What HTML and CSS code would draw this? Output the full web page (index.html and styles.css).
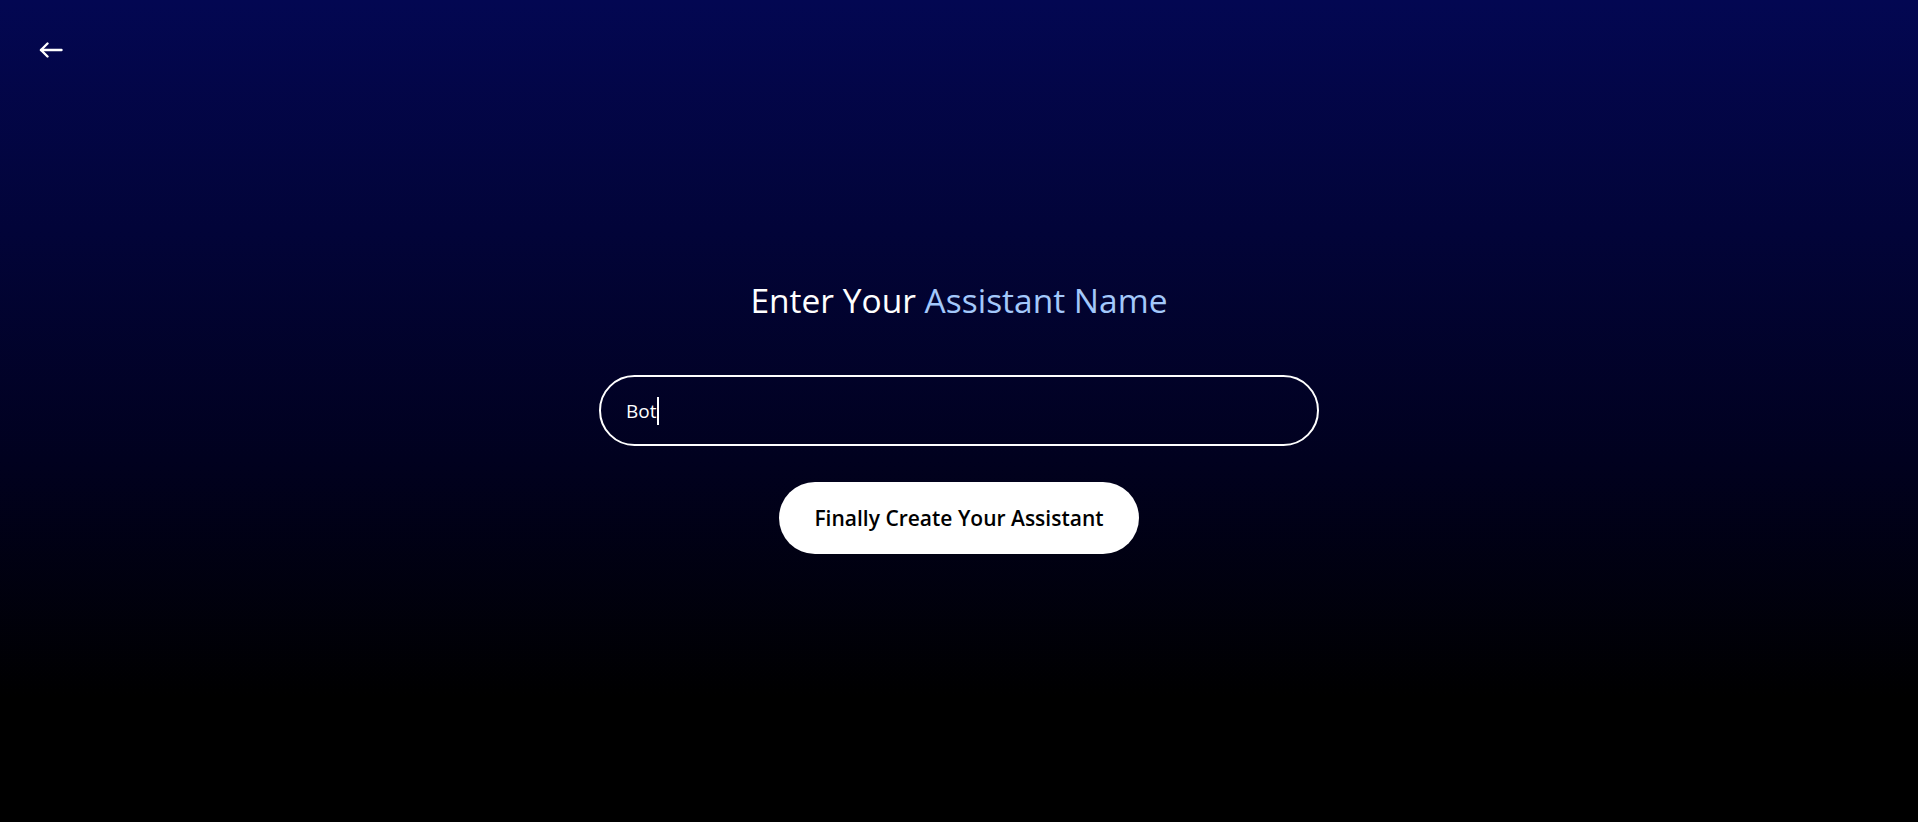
FILE: index.html
```html
<!DOCTYPE html>
<html lang="en">
<head>
<meta charset="utf-8">
<title>Customize Assistant Name</title>
<link rel="stylesheet" href="styles.css">
</head>
<body>
<main class="page">
  <button class="back" aria-label="Back">
    <svg width="24" height="16" viewBox="0 0 24 16" fill="none" stroke="#ffffff" stroke-width="2.4" stroke-linecap="round" stroke-linejoin="round"><path d="M22.5 8H2"/><path d="M8.5 1.5L2 8l6.5 6.5"/></svg>
  </button>
  <h1 class="title">Enter Your <span class="accent">Assistant Name</span></h1>
  <div class="field"><span class="value">Bot</span><span class="caret"></span></div>
  <button class="cta">Finally Create Your Assistant</button>
</main>
</body>
</html>
```

FILE: styles.css
```css
* { box-sizing: border-box; }
html, body { margin: 0; padding: 0; height: 100%; }
body {
  background: linear-gradient(to bottom, #030752 0%, #01011f 56%, #000000 85%);
  font-family: "Open Sans", "Noto Sans", sans-serif;
  color: #ffffff;
}
.page {
  position: relative;
  height: 822px;
  display: flex;
  flex-direction: column;
  align-items: center;
  justify-content: center;
  padding-top: 10px;
}
.back {
  position: absolute;
  top: 42px;
  left: 39px;
  padding: 0;
  border: 0;
  background: none;
  display: flex;
}
.title {
  margin: 0 0 53px;
  font-size: 33.5px;
  font-weight: 400;
  line-height: 44px;
  color: #ffffff;
}
.accent { color: #a3c8fb; }
.field {
  width: 720px;
  height: 71px;
  border: 2px solid #ffffff;
  border-radius: 36px;
  background: transparent;
  display: flex;
  align-items: center;
  padding-left: 25px;
  font-size: 19px;
}
.value { color: #ffffff; }
.caret {
  width: 2px;
  height: 28px;
  background: #ffffff;
  margin-left: 1px;
}
.cta {
  margin-top: 36px;
  width: 360px;
  height: 72px;
  border: 0;
  border-radius: 36px;
  background: #ffffff;
  color: #000000;
  font-family: "Open Sans", "Noto Sans", sans-serif;
  font-size: 21px;
  font-weight: 600;
}
```
